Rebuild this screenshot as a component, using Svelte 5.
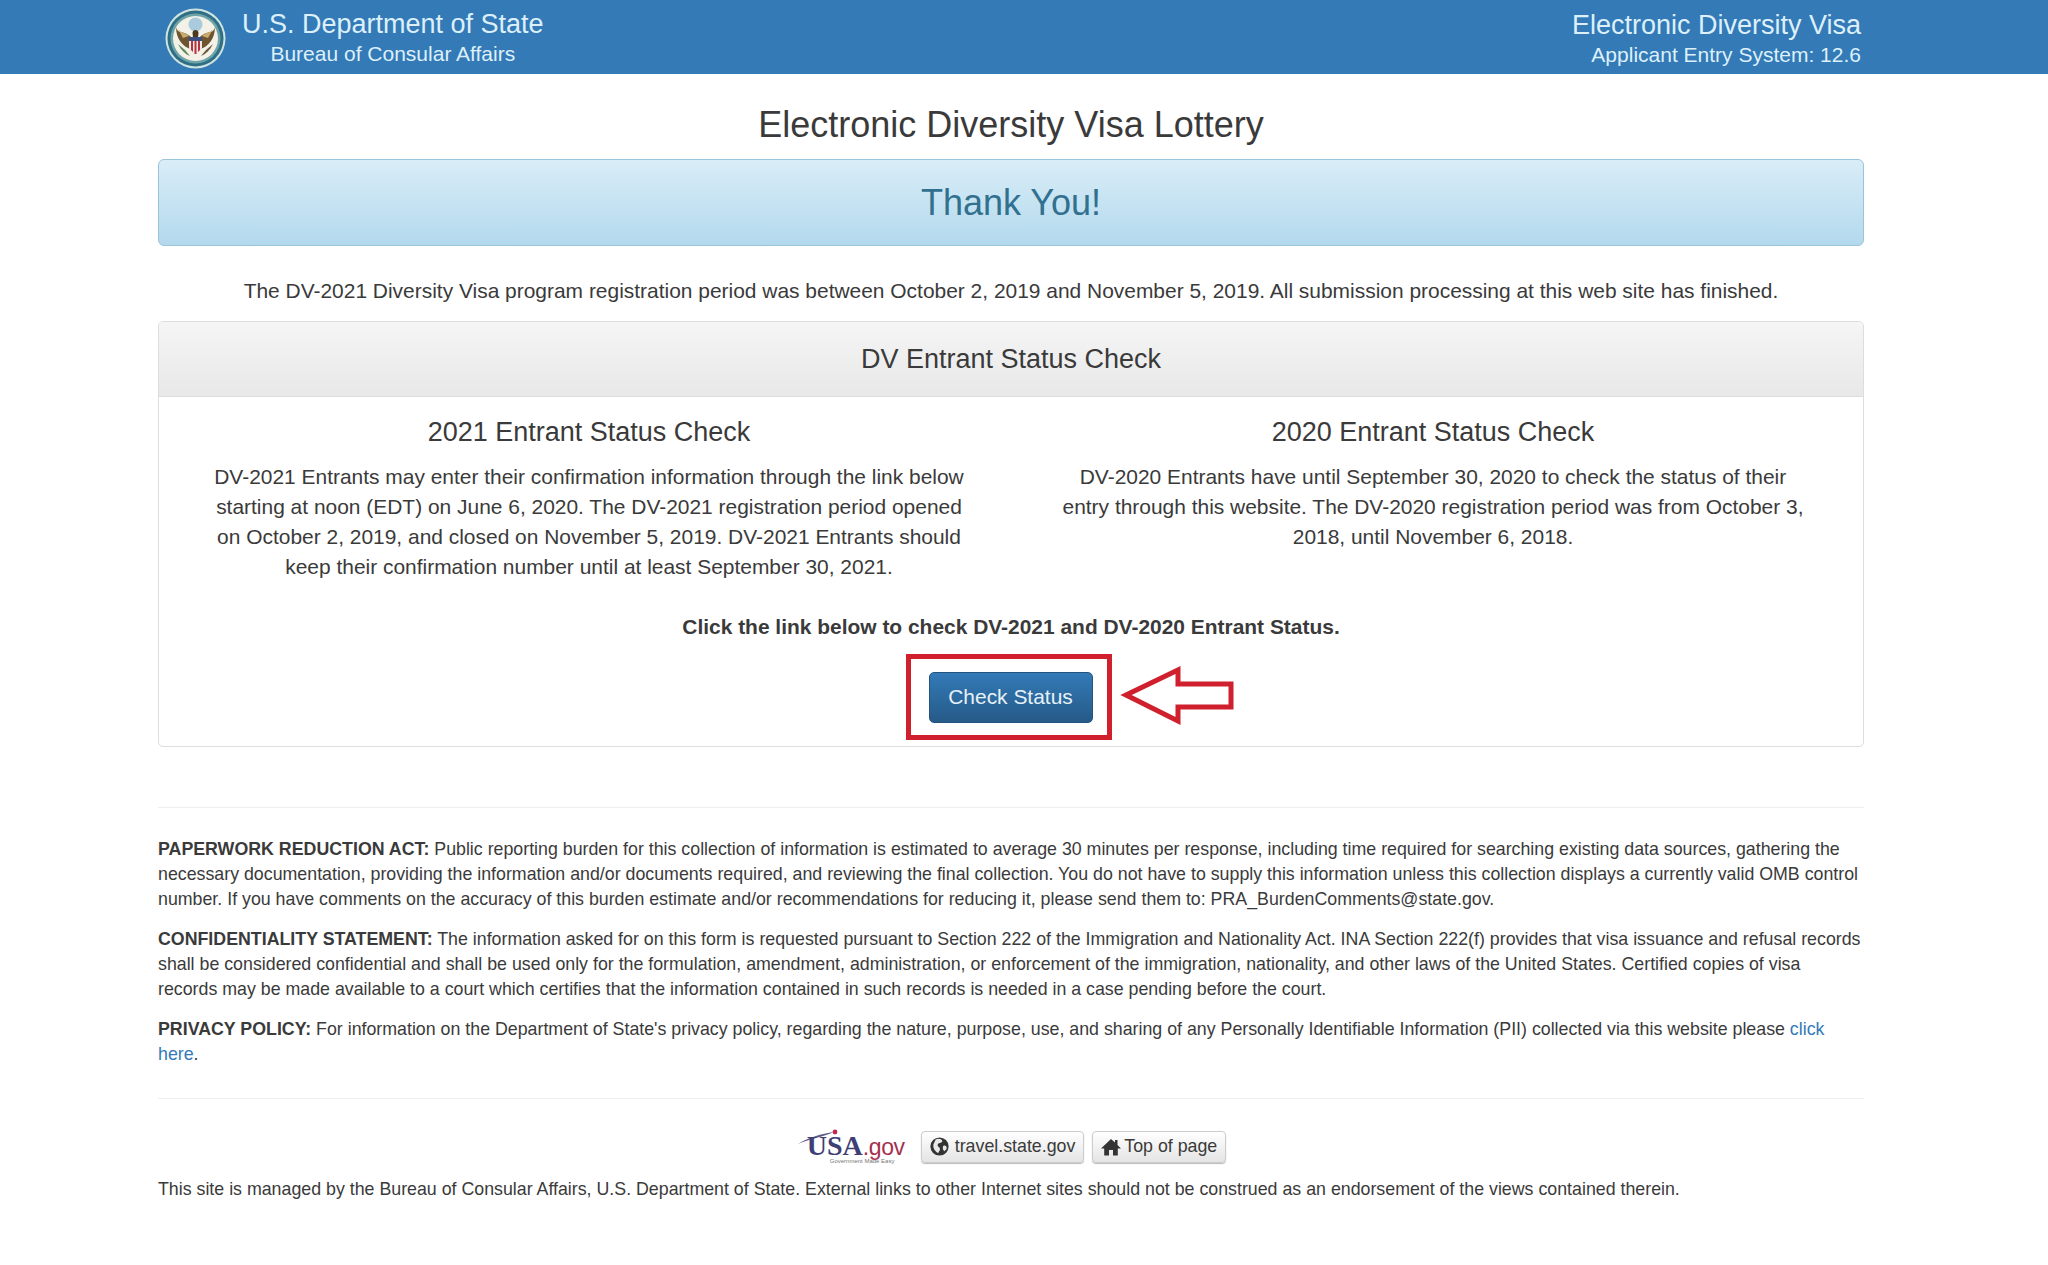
<script>
  const policyLink = "click here";
</script>

<header class="topbar">
  <div class="wrap bar-inner">
    <div class="brand">
      <svg class="seal" viewBox="0 0 61 61" width="61" height="61">
        <circle cx="30.5" cy="30.5" r="30" fill="#cfe3e0" />
        <circle cx="30.5" cy="30.5" r="28" fill="#2f6f86" />
        <circle cx="30.5" cy="30.5" r="25" fill="#6ea3a8" />
        <circle cx="30.5" cy="30.5" r="22.5" fill="#f3f1e8" />
        <circle cx="30.5" cy="16.5" r="7" fill="#a9cbdc" />
        <path d="M11 19 C13 27 19 22 26 29 L26 41 C18 39 11 31 11 19Z" fill="#6e5430" />
        <path d="M50 19 C48 27 42 22 35 29 L35 41 C43 39 50 31 50 19Z" fill="#6e5430" />
        <path d="M13 21 C17 26 20 24 24 28 L18 30Z" fill="#c8ab6e" />
        <path d="M48 21 C44 26 41 24 37 28 L43 30Z" fill="#c8ab6e" />
        <path d="M27.5 25 C27.5 21 33.5 21 33.5 25 L33 29 H28Z" fill="#4a3820" />
        <path d="M24 29 H37 V39 C37 43 33 45 30.5 46 C28 45 24 43 24 39Z" fill="#f2e9e4" />
        <path d="M24 29 H37 V33 H24Z" fill="#3c4f82" />
        <path d="M26 33 H28 V44 L26 42Z M29.5 33 H31.5 V46 H29.5Z M33 33 H35 V42 L33 44Z" fill="#b8323f" />
        <path d="M13 36 C16 42 20 46 25 48 L20 42Z" fill="#5b8a52" />
        <path d="M48 36 C45 42 41 46 36 48 L41 42Z" fill="#6d5a3c" />
      </svg>
      <div class="brand-text">
        <div class="big">U.S. Department of State</div>
        <div class="small">Bureau of Consular Affairs</div>
      </div>
    </div>
    <div class="sys">
      <div class="big">Electronic Diversity Visa</div>
      <div class="small">Applicant Entry System: 12.6</div>
    </div>
  </div>
</header>

<main class="wrap">
  <h1>Electronic Diversity Visa Lottery</h1>
  <div class="thanks"><h2>Thank You!</h2></div>
  <p class="lead">The DV-2021 Diversity Visa program registration period was between October 2, 2019 and November 5, 2019. All submission processing at this web site has finished.</p>

  <section class="panel">
    <div class="panel-head">DV Entrant Status Check</div>
    <div class="panel-body">
      <div class="cols">
        <div>
          <h3>2021 Entrant Status Check</h3>
          <p>DV-2021 Entrants may enter their confirmation information through the link below starting at noon (EDT) on June 6, 2020. The DV-2021 registration period opened on October 2, 2019, and closed on November 5, 2019. DV-2021 Entrants should keep their confirmation number until at least September 30, 2021.</p>
        </div>
        <div>
          <h3>2020 Entrant Status Check</h3>
          <p>DV-2020 Entrants have until September 30, 2020 to check the status of their entry through this website. The DV-2020 registration period was from October 3, 2018, until November 6, 2018.</p>
        </div>
      </div>
      <p class="cta">Click the link below to check DV-2021 and DV-2020 Entrant Status.</p>
      <div class="action">
        <div class="btn-frame">
          <button class="primary">Check Status</button>
          <svg class="arrow" viewBox="0 0 116 62" width="116" height="62">
            <path d="M6 30 L58 5 V19 H111 V42 H58 V56Z" fill="#fff" stroke="#d0202e" stroke-width="5" />
          </svg>
        </div>
      </div>
    </div>
  </section>

  <hr class="first" />

  <div class="legal">
    <p><b>PAPERWORK REDUCTION ACT:</b> Public reporting burden for this collection of information is estimated to average 30 minutes per response, including time required for searching existing data sources, gathering the necessary documentation, providing the information and/or documents required, and reviewing the final collection. You do not have to supply this information unless this collection displays a currently valid OMB control number. If you have comments on the accuracy of this burden estimate and/or recommendations for reducing it, please send them to: PRA_BurdenComments@state.gov.</p>
    <p><b>CONFIDENTIALITY STATEMENT:</b> The information asked for on this form is requested pursuant to Section 222 of the Immigration and Nationality Act. INA Section 222(f) provides that visa issuance and refusal records shall be considered confidential and shall be used only for the formulation, amendment, administration, or enforcement of the immigration, nationality, and other laws of the United States. Certified copies of visa records may be made available to a court which certifies that the information contained in such records is needed in a case pending before the court.</p>
    <p><b>PRIVACY POLICY:</b> For information on the Department of State's privacy policy, regarding the nature, purpose, use, and sharing of any Personally Identifiable Information (PII) collected via this website please <a href="#top">{policyLink}</a>.</p>
  </div>

  <hr class="second" />

  <div class="links">
    <div class="usa">
      <svg class="swoosh" viewBox="0 0 46 22" width="46" height="22">
        <path d="M1 17 C12 10 24 7 37 5 C26 10 12 12 1 17Z" fill="#5b5a86" />
        <circle cx="38" cy="5" r="2.4" fill="#c2274f" />
      </svg>
      <span class="usa-word"><span class="u">USA</span><span class="gov">.gov</span></span>
      <span class="usa-tag">Government Made Easy</span>
    </div>
    <a class="small-btn" href="#top">
      <svg viewBox="0 0 20 20" width="19" height="19">
        <circle cx="10" cy="10" r="9.6" fill="#333" />
        <path d="M6 2.5 C9 1 13 2 13 4.5 C12 7 8.5 5.5 8 8.5 C8 11 11 10.5 10.5 13.5 L8.5 17 C5 15 3 12 3.5 8Z M14.5 9 C16.5 8.5 18 10 17.5 12.5 L15 15 C13 13 13 10 14.5 9Z" fill="#e9e9e9" />
      </svg>
      travel.state.gov
    </a>
    <a class="small-btn home" href="#top">
      <svg viewBox="0 0 20 18" width="20" height="18">
        <path d="M10 1 L14 4.6 V2 H16.5 V6.9 L20 10.6 H16.8 V17.5 H12 V12 H8 V17.5 H3.2 V10.6 H0Z" fill="#333" />
      </svg>
      Top of page
    </a>
  </div>
  <p class="managed">This site is managed by the Bureau of Consular Affairs, U.S. Department of State. External links to other Internet sites should not be construed as an endorsement of the views contained therein.</p>
</main>

<style>
  :global(body) {
    margin: 0;
    background: #fff;
    font-family: "Liberation Sans", Arial, sans-serif;
    color: #3a3a3a;
    height: 1265px;
    overflow: hidden;
  }
  .wrap {
    width: 1706px;
    margin-left: 158px;
  }
  .topbar {
    background: #337ab7;
    height: 74px;
    color: #ddf0fa;
  }
  .bar-inner {
    display: flex;
    justify-content: space-between;
    height: 74px;
  }
  .brand {
    display: flex;
    align-items: flex-start;
    gap: 16px;
    padding-left: 7px;
  }
  .seal {
    flex: none;
    margin-top: 8px;
  }
  .brand-text {
    text-align: center;
  }
  .big {
    font-size: 27px;
    line-height: 30px;
    padding-top: 9px;
  }
  .small {
    font-size: 21px;
    line-height: 30px;
  }
  .sys {
    text-align: right;
    padding-right: 3px;
    padding-top: 1px;
  }
  h1 {
    margin: 0;
    padding-top: 30px;
    font-weight: 400;
    font-size: 36px;
    line-height: 42px;
    text-align: center;
  }
  .thanks {
    margin-top: 13px;
    height: 87px;
    box-sizing: border-box;
    border: 1px solid #9ac4dc;
    border-radius: 6px;
    background: linear-gradient(#d9edf7, #b3d9ed);
    display: flex;
    align-items: center;
    justify-content: center;
  }
  h2 {
    margin: 0;
    font-weight: 400;
    font-size: 36px;
    color: #31708f;
  }
  .lead {
    margin: 30px 0 0;
    font-size: 20.95px;
    line-height: 30px;
    text-align: center;
  }
  .panel {
    margin-top: 15px;
    height: 426px;
    box-sizing: border-box;
    border: 1px solid #ddd;
    border-radius: 5px;
    overflow: hidden;
  }
  .panel-head {
    height: 75px;
    box-sizing: border-box;
    background: linear-gradient(#f5f5f5, #e8e8e8);
    border-bottom: 1px solid #ddd;
    font-size: 27px;
    line-height: 75px;
    text-align: center;
  }
  .cols {
    display: grid;
    grid-template-columns: 752px 752px;
    padding: 0 54px;
    gap: 92px;
    text-align: center;
  }
  h3 {
    margin: 20px 0 15px;
    font-weight: 400;
    font-size: 27px;
    line-height: 30px;
  }
  .cols p {
    margin: 0;
    font-size: 20.95px;
    line-height: 30px;
  }
  .cta {
    margin: 30px 0 0;
    font-size: 20.95px;
    line-height: 30px;
    font-weight: 700;
    text-align: center;
  }
  .action {
    display: flex;
    justify-content: center;
    margin-top: 12px;
    padding-right: 4px;
  }
  .btn-frame {
    position: relative;
    width: 193px;
    height: 76px;
    padding-left: 3px;
    border: 5px solid #d0202e;
    display: flex;
    align-items: center;
    justify-content: center;
  }
  .primary {
    width: 164px;
    height: 51px;
    border: 1px solid #245580;
    border-radius: 5px;
    background: linear-gradient(#337ab7, #265a88);
    color: #e6f1f8;
    font: 20.95px "Liberation Sans", Arial, sans-serif;
    padding: 0;
  }
  .arrow {
    position: absolute;
    left: 209px;
    top: 6px;
  }
  hr {
    border: 0;
    border-top: 1px solid #eee;
    margin: 0;
  }
  .first {
    margin-top: 60px;
  }
  .legal {
    margin-top: 29px;
    font-size: 17.8px;
    line-height: 25px;
  }
  .legal p {
    margin: 0 0 15px;
  }
  .legal a {
    color: #337ab7;
    text-decoration: none;
  }
  .second {
    margin-top: 31px;
  }
  .links {
    display: flex;
    justify-content: center;
    align-items: center;
    gap: 8px;
    margin-top: 31px;
  }
  .usa {
    position: relative;
    width: 117px;
    height: 33px;
  }
  .swoosh {
    position: absolute;
    left: 1px;
    top: -3px;
  }
  .usa-word {
    position: absolute;
    left: 11px;
    top: 1px;
    font-family: "Liberation Serif", serif;
    font-size: 28px;
    font-weight: 700;
    line-height: 30px;
    white-space: nowrap;
  }
  .u {
    color: #3f3f78;
  }
  .gov {
    color: #a5304e;
    font-family: "Liberation Sans", sans-serif;
    font-size: 23px;
    font-weight: 400;
    letter-spacing: -0.4px;
  }
  .usa-tag {
    position: absolute;
    left: 34px;
    top: 28px;
    font-size: 6px;
    line-height: 7px;
    color: #777;
    white-space: nowrap;
  }
  .small-btn {
    display: inline-flex;
    align-items: center;
    gap: 6px;
    height: 32px;
    box-sizing: border-box;
    padding: 0 8px;
    border: 1px solid #ccc;
    border-radius: 4px;
    background: linear-gradient(#fff, #e4e4e4);
    box-shadow: 0 1px 1px #bbb;
    font-size: 17.8px;
    color: #3a3a3a;
    text-decoration: none;
  }
  .home {
    gap: 3px;
  }
  .managed {
    margin: 14px 0 0;
    font-size: 17.8px;
    line-height: 25px;
  }
</style>
